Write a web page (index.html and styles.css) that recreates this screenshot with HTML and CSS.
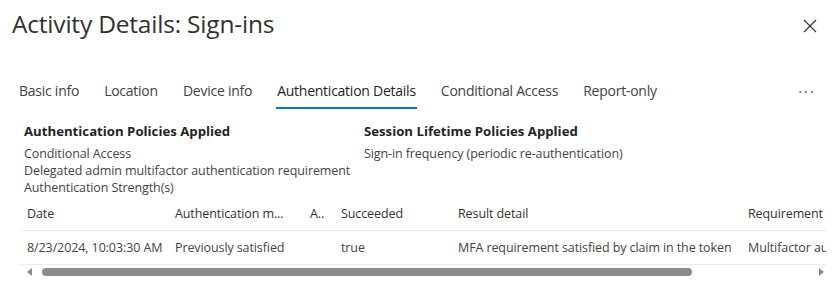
FILE: index.html
```html
<!DOCTYPE html>
<html lang="en">
<head>
    <meta charset="UTF-8">
    <title>Activity Details: Sign-ins</title>
    <link rel="stylesheet" href="styles.css">
</head>
<body>
    <div class="panel">
        <div class="header">
            <h1>Activity Details: Sign-ins</h1>
            <button class="close" aria-label="Close">
                <svg width="14" height="14" viewBox="0 0 14 14"><path d="M1 1 L13 13 M13 1 L1 13" stroke="#323130" stroke-width="1.1" fill="none"/></svg>
            </button>
        </div>

        <div class="tabs">
            <span class="tab">Basic info</span>
            <span class="tab">Location</span>
            <span class="tab">Device info</span>
            <span class="tab active">Authentication Details</span>
            <span class="tab">Conditional Access</span>
            <span class="tab">Report-only</span>
            <span class="more">&middot;&middot;&middot;</span>
        </div>

        <div class="policies">
            <div class="policy-col first">
                <h2>Authentication Policies Applied</h2>
                <p>Conditional Access</p>
                <p>Delegated admin multifactor authentication requirement</p>
                <p>Authentication Strength(s)</p>
            </div>
            <div class="policy-col">
                <h2>Session Lifetime Policies Applied</h2>
                <p>Sign-in frequency (periodic re-authentication)</p>
            </div>
        </div>

        <div class="grid-wrap">
            <div class="grid">
                <div class="row head">
                    <span class="c1">Date</span>
                    <span class="c2">Authentication m...</span>
                    <span class="c3">A..</span>
                    <span class="c4">Succeeded</span>
                    <span class="c5">Result detail</span>
                    <span class="c6">Requirement</span>
                </div>
                <div class="row">
                    <span class="c1">8/23/2024, 10:03:30 AM</span>
                    <span class="c2">Previously satisfied</span>
                    <span class="c3"></span>
                    <span class="c4">true</span>
                    <span class="c5">MFA requirement satisfied by claim in the token</span>
                    <span class="c6">Multifactor au</span>
                </div>
            </div>
            <div class="scrollbar">
                <span class="arrow left"></span>
                <div class="track"><div class="thumb"></div></div>
                <span class="arrow right"></span>
            </div>
        </div>
    </div>
</body>
</html>
```

FILE: styles.css
```css
body {
    margin: 0;
    background: #fff;
    font-family: "Open Sans", "Noto Sans", sans-serif;
    color: #323130;
}
.panel {
    padding: 9px 13px 0 12px;
}
.header {
    display: flex;
    justify-content: space-between;
    align-items: center;
    height: 30px;
}
h1 {
    margin: 0;
    font-size: 24.5px;
    font-weight: 400;
    line-height: 30px;
    letter-spacing: -0.2px;
}
.close {
    border: 0;
    background: none;
    padding: 0;
    margin-right: 9px;
    display: flex;
    margin-top: 4px;
}
.tabs {
    display: flex;
    align-items: flex-start;
    margin-top: 35px;
    padding-left: 7px;
    gap: 25px;
    font-size: 14px;
    color: #424242;
}
.tab {
    padding: 7px 0 6px;
    line-height: 20px;
    border-bottom: 2px solid transparent;
    letter-spacing: -0.25px;
}
.tab.active {
    color: #242424;
    border-bottom-color: #0078d4;
    margin: 0 -1px;
    padding-left: 1px;
    padding-right: 1px;
}
.more {
    margin-left: auto;
    margin-right: 10px;
    line-height: 34px;
    font-size: 15px;
    letter-spacing: 2px;
    color: #555;
}
.policies {
    display: flex;
    margin-top: 13px;
    padding-left: 12px;
}
.policy-col.first {
    width: 340px;
}
.policy-col h2 {
    margin: 0 0 5px;
    font-size: 13.2px;
    font-weight: 700;
    line-height: 18px;
    color: #242424;
}
.policy-col p {
    margin: 0;
    font-size: 12.5px;
    line-height: 17px;
    color: #444;
    letter-spacing: -0.1px;
}
.grid-wrap {
    margin-top: 0;
    margin-left: 7px;
    width: 807px;
    overflow: hidden;
}
.grid {
    font-size: 12.5px;
    letter-spacing: -0.1px;
}
.row {
    display: flex;
    height: 33px;
    align-items: center;
    border-bottom: 1px solid #edebe9;
    white-space: nowrap;
    color: #444;
}
.row.head {
    height: 34px;
    color: #323130;
}
.row span {
    flex: none;
    padding-left: 8px;
    box-sizing: border-box;
    overflow: hidden;
}
.c1 { width: 148px; }
.c2 { width: 135px; }
.c3 { width: 31px; }
.c4 { width: 117px; }
.c5 { width: 290px; }
.c6 { width: 86px; }
.scrollbar {
    display: flex;
    align-items: center;
    height: 13px;
    padding: 0 2px 0 8px;
}
.arrow {
    width: 0;
    height: 0;
    border-top: 4px solid transparent;
    border-bottom: 4px solid transparent;
}
.arrow.left {
    border-right: 5px solid #8a8a8a;
}
.arrow.right {
    border-left: 5px solid #8a8a8a;
}
.track {
    flex: 1;
    margin: 0 10px;
}
.thumb {
    width: 650px;
    height: 8px;
    border-radius: 4px;
    background: #8a8a8a;
}
```
